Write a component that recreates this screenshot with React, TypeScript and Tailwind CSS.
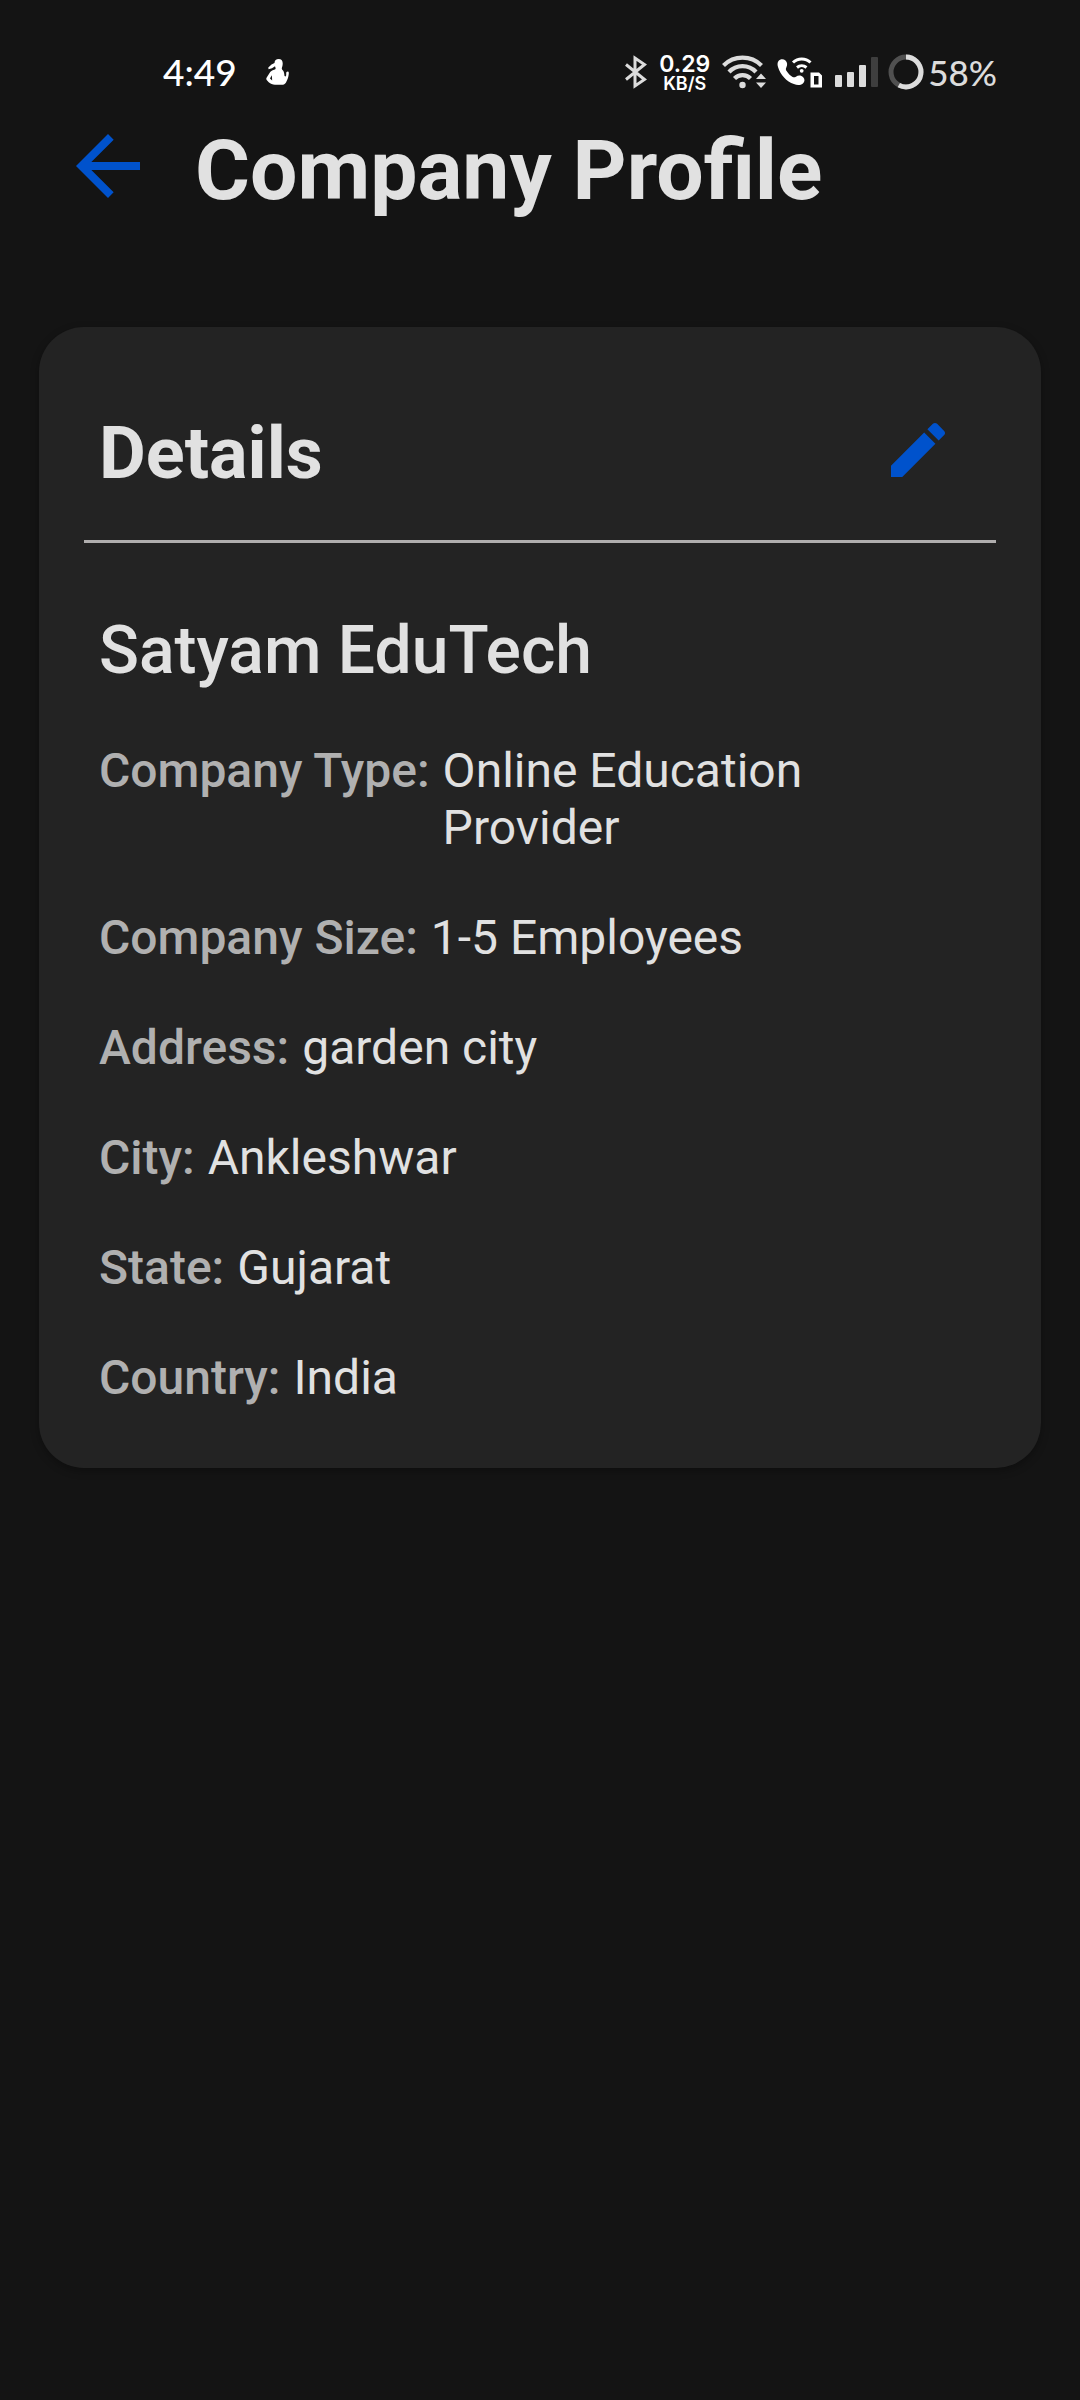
import React from "react";

const details = [
  { label: "Company Type:", value: "Online Education Provider" },
  { label: "Company Size:", value: "1-5 Employees" },
  { label: "Address:", value: "garden city" },
  { label: "City:", value: "Ankleshwar" },
  { label: "State:", value: "Gujarat" },
  { label: "Country:", value: "India" },
];

function PersonIcon() {
  return (
    <svg width="24" height="26" viewBox="0 0 24 26" fill="#fff" aria-hidden="true">
      <path d="M8.500 4C8.500 1.500 10.200 0 12.700 0s4 1.600 4 4.200c0 1.900-.3 3.300-.8 4.600-.3 1 .1 1.700.9 2.500 1.200 1.300 1.500 3.400 1.700 5.700l1.200.6c.5-.9.7-1.800.5-2.800-.2-1.400.6-2.300 1.600-2.300 1.200.2 1.100 1.500.9 3-.4 3-1.300 5.600-2.700 7.900-1 1.600-2.200 2.300-4.200 2.300H9c-2.400-.2-4.500-1-6.300-2.500L.9 21.200c-.8-.8-.8-1.700-.2-2.700L4.200 13c1.100-1.300 2.600-2.200 4.600-2.600.9-.4 1-1.200.6-2L9 7.300 6 9.200 2.500 10.200 2.300 8.500 5.500 5.600z" />
      <path d="M5.800 16.200 4 19.400l2.200 2z" fill="#141414" />
    </svg>
  );
}

function BluetoothIcon() {
  return (
    <svg width="22" height="34" viewBox="0 0 22 34" fill="none" stroke="#dcdcdc" strokeWidth="3" aria-hidden="true">
      <path d="M1 9.500 19.500 24.500 10 31V3l9.500 6.500L1 24.500" />
    </svg>
  );
}

function WifiIcon() {
  return (
    <svg width="45" height="36" viewBox="0 0 45 36" fill="none" aria-hidden="true">
      <g stroke="#dcdcdc" strokeWidth="4.200">
        <path d="M1.500 11.500A27 27 0 0 1 39.500 11.500" />
        <path d="M7 18A18.500 18.500 0 0 1 34 18" />
        <path d="M12.500 24.500A11 11 0 0 1 28.500 24.500" />
      </g>
      <circle cx="20.500" cy="31" r="3.200" fill="#dcdcdc" />
      <path d="M34 25 39 19.500 44 25zM34 28.500h10L39 34z" fill="#dcdcdc" />
    </svg>
  );
}

function CallIcon() {
  return (
    <svg width="46" height="34" viewBox="0 0 46 34" fill="none" aria-hidden="true">
      <path d="M1.500 6C3 4 6.500 3.700 8.500 5.500c1.900 1.900 2.200 4.400.8 7-.7 1.400-.5 2.300.3 3.500 1.700 2.600 3.500 4.500 6 5.900 1.200.6 2.100.6 3.300-.2 2.500-1.600 5.300-1.400 7.300.5 1.800 1.900 1.700 4.500-.3 6.200-2.500 2-5.600 1.900-9 .7C9.500 26.500 3.500 20 1 12 .3 9.700.3 7.700 1.500 6z" fill="#fff" />
      <g stroke="#fff" strokeWidth="3">
        <path d="M16 7.500A12.500 12.500 0 0 1 33.500 7.500" />
        <path d="M20 12.500A7.500 7.500 0 0 1 29.500 12.500" />
      </g>
      <circle cx="24.700" cy="15.800" r="1.900" fill="#fff" />
      <path d="M33.500 17.500h8.500l3 3V32.500H33.500zM37 21v8.500h4.500v-8.500z" fill="#fff" fillRule="evenodd" />
    </svg>
  );
}

function SignalIcon() {
  return (
    <svg width="44" height="32" viewBox="0 0 44 32" fill="#dcdcdc" aria-hidden="true">
      <rect x="0" y="19" width="7" height="12" rx="1" />
      <rect x="12" y="16" width="7" height="15" rx="1" />
      <rect x="24" y="9" width="7" height="22" rx="1" />
      <rect x="36" y="1" width="7" height="30" rx="1" fill="#3e3e3e" />
    </svg>
  );
}

function BatteryRing() {
  return (
    <svg width="36" height="36" viewBox="0 0 36 36" fill="none" strokeWidth="5" aria-hidden="true">
      <circle cx="18" cy="18" r="15" stroke="#505050" />
      <circle cx="18" cy="18" r="15" stroke="#dcdcdc" pathLength="100" strokeDasharray="58 42" transform="rotate(-90 18 18)" />
    </svg>
  );
}

function StatusBar() {
  return (
    <div className="flex h-[118px] items-center justify-between pl-[163px] pr-[83px] pt-[26px] font-['Lato',sans-serif] leading-[36px]">
      <div className="flex items-center gap-[29px] text-white">
        <span className="text-[37px] font-medium">4:49</span>
        <PersonIcon />
      </div>
      <div className="flex items-center text-[#dcdcdc]">
        <BluetoothIcon />
        <div className="mx-3 flex flex-col items-center pt-[2px] font-['Inter',sans-serif] font-semibold text-white">
          <span className="text-[23px] leading-[22px]">0.29</span>
          <span className="text-[18px] leading-[18px]">KB/S</span>
        </div>
        <WifiIcon />
        <div className="ml-[10px] mr-3">
          <CallIcon />
        </div>
        <SignalIcon />
        <div className="ml-[9px] mr-1">
          <BatteryRing />
        </div>
        <span className="text-[35px] font-medium">58%</span>
      </div>
    </div>
  );
}

export default function App() {
  return (
    <div className="min-h-screen bg-[#141414] font-['Roboto',sans-serif] text-[#e1e1e1]">
      <StatusBar />
      <header className="flex items-start gap-[39px] px-[60px]">
        <button type="button" aria-label="Back" className="shrink-0 text-[#0052cc]">
          <svg width="96" height="96" viewBox="0 0 24 24" fill="currentColor" aria-hidden="true">
            <path d="M20 11H7.830l5.590-5.590L12 4l-8 8 8 8 1.410-1.410L7.830 13H20v-2z" />
          </svg>
        </button>
        <h1 className="text-[84px] font-bold leading-[106px]">Company Profile</h1>
      </header>
      <main className="mx-[39px] mt-[103px] rounded-[45px] bg-[#232323] px-[45px] pb-[62px] pt-[66px] shadow-[0_3px_9px_rgba(0,0,0,0.3)]">
        <div className="flex items-start justify-between border-b-3 border-[#b0aeae] pb-[25px] pl-[15px] pr-[42px]">
          <h2 className="text-[72px] font-bold leading-[122px]">Details</h2>
          <button type="button" aria-label="Edit details" className="flex h-[114px] items-center text-[#0052cc]">
            <svg width="72" height="72" viewBox="0 0 24 24" fill="currentColor" aria-hidden="true">
              <path d="M3 17.250V21h3.750L17.810 9.940l-3.750-3.750L3 17.250zM20.710 7.040c.39-.39.39-1.020 0-1.410l-2.340-2.340c-.39-.39-1.020-.39-1.410 0l-1.830 1.830 3.750 3.750 1.830-1.830z" />
            </svg>
          </button>
        </div>
        <section className="px-[15px] pt-[66px]">
          <h3 className="text-[66px] font-medium leading-[84px]">Satyam EduTech</h3>
          <dl className="mt-[49px] flex flex-col gap-[53px] text-[48px] leading-[57px]">
            {details.map((d) => (
              <div key={d.label} className="flex gap-[13px]">
                <dt className="shrink-0 font-medium text-[#b0b0b0]">{d.label}</dt>
                <dd>{d.value}</dd>
              </div>
            ))}
          </dl>
        </section>
      </main>
    </div>
  );
}
